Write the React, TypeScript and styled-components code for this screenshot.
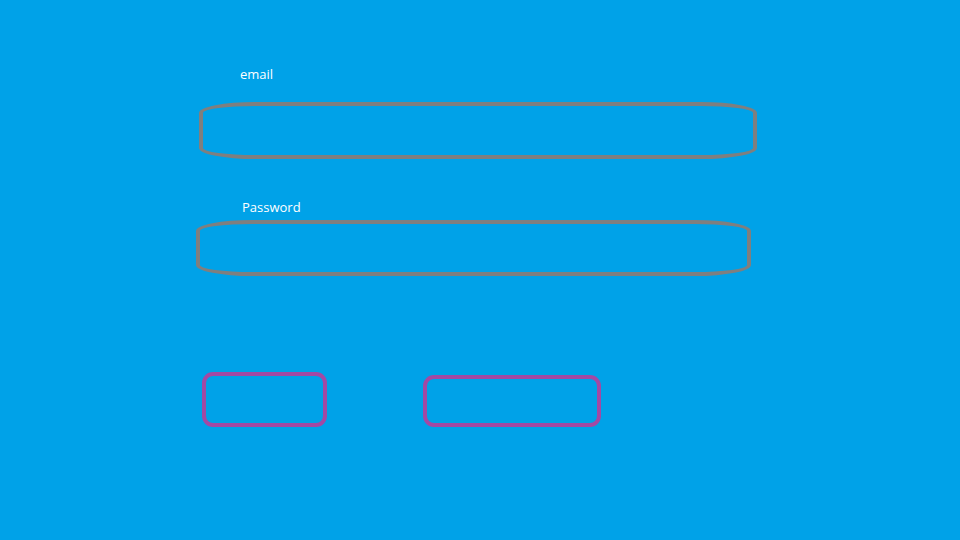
import React from "react";
import styled, { createGlobalStyle } from "styled-components";

const GlobalStyle = createGlobalStyle`
  html, body {
    margin: 0;
    padding: 0;
    background: #00a2e8;
  }
  body {
    font-family: "Open Sans", "Noto Sans", sans-serif;
  }
`;

const Page = styled.div`
  width: 960px;
  height: 540px;
  box-sizing: border-box;
  padding-top: 66px;
  display: flex;
  flex-direction: column;
  align-items: flex-start;
  overflow: hidden;
`;

const Label = styled.label<{ $indent: number; $gap?: number }>`
  display: block;
  margin-left: ${(p) => p.$indent}px;
  margin-top: ${(p) => p.$gap ?? 0}px;
  color: #ffffff;
  font-size: 13px;
  line-height: 16px;
`;

const Input = styled.input<{
  $indent: number;
  $gap: number;
  $width: number;
  $height: number;
}>`
  display: block;
  box-sizing: border-box;
  margin: ${(p) => p.$gap}px 0 0 ${(p) => p.$indent}px;
  width: ${(p) => p.$width}px;
  height: ${(p) => p.$height}px;
  padding: 0 24px;
  border: 4px solid #7f7f7f;
  border-radius: 56px / 11px;
  background: transparent;
  color: #ffffff;
  font: inherit;
  outline: none;
`;

const ButtonRow = styled.div`
  display: flex;
  align-items: flex-start;
  margin: 96px 0 0 202px;
  gap: 96px;
`;

const Button = styled.button<{ $width: number; $height: number; $offset?: number }>`
  box-sizing: border-box;
  width: ${(p) => p.$width}px;
  height: ${(p) => p.$height}px;
  margin-top: ${(p) => p.$offset ?? 0}px;
  border: 4px solid #a349a4;
  border-radius: 11px;
  background: transparent;
  color: #ffffff;
  cursor: pointer;
`;

export default function App() {
  return (
    <>
      <GlobalStyle />
      <Page>
        <Label $indent={240}>email</Label>
        <Input $indent={199} $gap={20} $width={558} $height={57} type="email" />
        <Label $indent={242} $gap={40}>
          Password
        </Label>
        <Input $indent={196} $gap={5} $width={555} $height={56} type="password" />
        <ButtonRow>
          <Button $width={125} $height={55} type="submit" />
          <Button $width={178} $height={52} $offset={3} type="button" />
        </ButtonRow>
      </Page>
    </>
  );
}
